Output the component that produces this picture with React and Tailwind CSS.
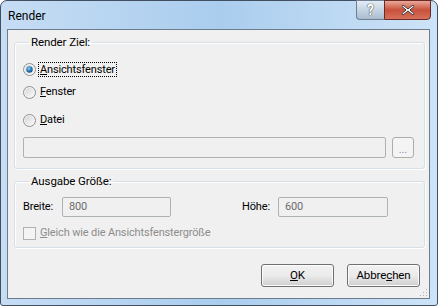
import React from 'react'

const font = { fontFamily: 'Roboto, "Noto Sans", sans-serif' }

const Radio = ({ checked }) => (
  <svg width="13" height="13" viewBox="0 0 13 13" className="shrink-0">
    <defs>
      <linearGradient id={checked ? 'rg1' : 'rg0'} x1="0" y1="0" x2="1" y2="1">
        <stop offset="0" stopColor="#d4d4d4" />
        <stop offset="1" stopColor="#fbfbfb" />
      </linearGradient>
      <radialGradient id="dot" cx="0.4" cy="0.35" r="0.7">
        <stop offset="0" stopColor="#8fd0f8" />
        <stop offset="0.5" stopColor="#2f83c0" />
        <stop offset="1" stopColor="#0c4473" />
      </radialGradient>
    </defs>
    <circle cx="6.5" cy="6.5" r="6" fill="#f4f4f4" stroke="#8e8f8f" />
    <circle cx="6.5" cy="6.5" r="4.5" fill={`url(#${checked ? 'rg1' : 'rg0'})`} />
    {checked && <circle cx="6.5" cy="6.5" r="3.2" fill="url(#dot)" />}
  </svg>
)

const WinButton = ({ children }) => (
  <button className="w-[73px] h-[23px] rounded-[3px] border border-[#707070] bg-gradient-to-b from-[#f2f2f2] via-[#ebebeb] to-[#cfcfcf] shadow-[inset_0_0_0_1px_#fcfcfc] text-[11.5px] tracking-[-0.1px] text-black">
    {children}
  </button>
)

const GroupBox = ({ title, className, children }) => (
  <fieldset className={`border border-[#d5dfe5] rounded-[3px] shadow-[inset_1px_1px_0_#fff,1px_1px_0_#fff] p-0 ${className}`}>
    <legend className="ml-[6px] px-[2px] h-[16px] leading-[16px] text-[11.5px] tracking-[-0.1px] text-black">{title}</legend>
    {children}
  </fieldset>
)

export default function App() {
  return (
    <div className="w-[438px] h-[306px] bg-white text-[11px] tracking-[-0.15px]" style={font}>
      <div className="w-full h-full flex flex-col rounded-t-[7px] rounded-b-[3px] border border-[#414f60] bg-gradient-to-r from-[#c6ddf4] via-[#aacdee] to-[#cde3f7] relative">
        {/* title bar */}
        <div className="h-[28px] flex items-start shrink-0">
          <div className="ml-[7px] mt-[7px] text-[12px] tracking-normal leading-[16px] text-black">Render</div>
          <div className="ml-auto mr-[6px] flex -mt-px">
            <div className="w-[28px] h-[20px] rounded-bl-[4px] border border-[#6e7f94] border-r-0 bg-gradient-to-b from-[#e3ecf5] via-[#c6d5e4] to-[#a9bccf] flex items-center justify-center">
              <span className="text-[14px] leading-none font-bold text-white [text-shadow:0_0_1px_#333,0_0_1px_#333]">?</span>
            </div>
            <div className="w-[47px] h-[20px] rounded-br-[4px] border border-[#6b2b24] bg-gradient-to-b from-[#e9a99b] via-[#c8503b] to-[#d7705c] flex items-center justify-center">
              <svg width="14" height="12" viewBox="0 0 14 12">
                <path d="M2 1 L7 5 L12 1 L13 2.5 L9 6 L13 9.5 L12 11 L7 7 L2 11 L1 9.5 L5 6 L1 2.5 Z" fill="#fff" stroke="#3c3c3c" strokeWidth="1" strokeLinejoin="round" />
              </svg>
            </div>
          </div>
        </div>

        {/* client area */}
        <div className="flex-1 ml-[6px] mr-[7px] mb-[6px] border border-[#6b7c8f] bg-[#f0f0f0] flex flex-col relative">
          <GroupBox title="Render Ziel:" className="mt-[4px] ml-[6px] mr-[4px] pl-[8px] pr-[10px] pb-[10px]">
            <div className="mt-[11px] h-[16px] flex items-center gap-[3px]">
              <Radio checked />
              <span className="outline outline-1 outline-dotted outline-black px-px leading-[13px]">
                <u>A</u>nsichtsfenster
              </span>
            </div>
            <div className="mt-[7px] h-[16px] flex items-center gap-[4px]">
              <Radio />
              <span><u>F</u>enster</span>
            </div>
            <div className="mt-[12px] h-[16px] flex items-center gap-[4px]">
              <Radio />
              <span><u>D</u>atei</span>
            </div>
            <div className="mt-[9px] flex gap-[6px]">
              <div className="flex-1 h-[21px] border border-[#adb2b5] rounded-[2px] bg-[#f0f0f0]" />
              <div className="w-[22px] h-[21px] border border-[#adadad] rounded-[3px] bg-[#f4f4f4] flex items-center justify-center text-[11px] text-[#8a8aa8] leading-none pt-[3px]">
                ...
              </div>
            </div>
          </GroupBox>

          <GroupBox title="Ausgabe Größe:" className="mt-[4px] ml-[6px] mr-[4px] pl-[8px] pr-[10px] pb-[6px]">
            <div className="mt-[8px] h-[20px] flex items-center">
              <span className="w-[39px]">Breite:</span>
              <div className="w-[109px] h-[20px] border border-[#adb2b5] rounded-[2px] bg-[#f0f0f0] flex items-center pl-[6px] text-[#6d6d6d]">800</div>
              <span className="ml-[71px] w-[36px]">Höhe:</span>
              <div className="w-[110px] h-[20px] border border-[#adb2b5] rounded-[2px] bg-[#f0f0f0] flex items-center pl-[6px] text-[#6d6d6d]">600</div>
            </div>
            <div className="mt-[8px] h-[16px] flex items-center gap-[4px] text-[#8d8d8d]">
              <div className="w-[13px] h-[13px] border border-[#b1b1b1] bg-[#f4f4f4] shrink-0" />
              <span><u>G</u>leich wie die Ansichtsfenstergröße</span>
            </div>
          </GroupBox>

          <div className="mt-[16px] mr-[9px] flex justify-end gap-[13px]">
            <WinButton><u>O</u>K</WinButton>
            <WinButton>Abbre<u>c</u>hen</WinButton>
          </div>

          <svg width="10" height="10" viewBox="0 0 10 10" className="absolute right-[1px] bottom-[1px]">
            {[[8, 2], [8, 5], [5, 5], [8, 8], [5, 8], [2, 8]].map(([x, y], i) => (
              <rect key={i} x={x} y={y} width="1" height="1" fill="#b0b0b0" />
            ))}
          </svg>
        </div>
      </div>
    </div>
  )
}
